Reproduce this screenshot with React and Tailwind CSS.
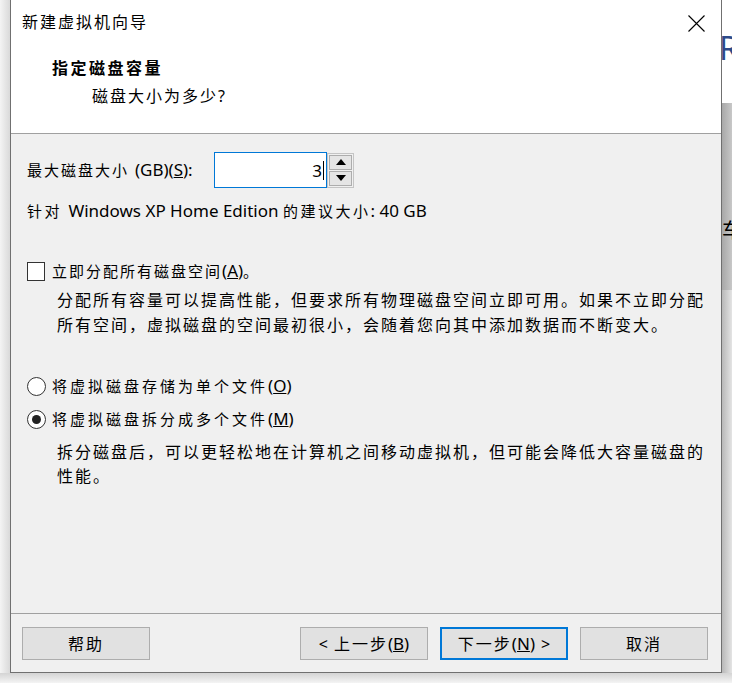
const font = "font-['Noto_Sans','Noto_Sans_CJK_SC',sans-serif]"

function Btn({ children, primary }) {
  return (
    <button
      className={`w-[128px] h-[33px] bg-[#e1e1e1] text-[16px] text-black flex items-center justify-center ${
        primary ? 'border-2 border-[#0078d7]' : 'border border-[#adadad]'
      }`}
    >
      {children}
    </button>
  )
}

function Arrow({ up }) {
  return (
    <svg width="10" height="6" viewBox="0 0 10 6">
      {up ? <path d="M0 6 L5 0 L10 6 Z" fill="#000" /> : <path d="M0 0 L5 6 L10 0 Z" fill="#000" />}
    </svg>
  )
}

function Radio({ checked }) {
  return (
    <span className="w-[19px] h-[19px] rounded-full border border-[#333] bg-white flex items-center justify-center shrink-0">
      {checked && <span className="w-[9px] h-[9px] rounded-full bg-[#222]" />}
    </span>
  )
}

// latin part inside spaced-out CJK text
function L({ children }) {
  return <span className="tracking-normal text-[17px]">{children}</span>
}

export default function App() {
  return (
    <div className={`w-[732px] h-[683px] overflow-hidden bg-white flex flex-col ${font}`}>
      <div className="flex h-[673px]">
        <div className="w-[10px] bg-gradient-to-r from-[#f4f4f4] to-[#d9d9d9]" />

        <div className="w-[712px] flex flex-col border-x border-b border-[#707070] bg-[#f0f0f0]">
          {/* header */}
          <div className="h-[134px] bg-white border-b border-[#a0a0a0] relative">
            <div className="pl-[11px] pt-[10px] leading-[24px] text-[16px] tracking-[2px] text-black">新建虚拟机向导</div>
            <svg className="absolute left-[677px] top-[15px]" width="17" height="17" viewBox="0 0 17 17">
              <path d="M0.5 0.5 L16.5 16.5 M16.5 0.5 L0.5 16.5" stroke="#000" strokeWidth="1.1" />
            </svg>
            <div className="pl-[41px] mt-[22px] leading-[24px] text-[16px] font-bold tracking-[2.5px] text-black">指定磁盘容量</div>
            <div className="pl-[81px] mt-[4px] leading-[24px] text-[16px] tracking-[2px] text-black">
              磁盘大小为多少<span className="tracking-normal">?</span>
            </div>
          </div>

          {/* body */}
          <div className="h-[479px] pl-[16px] text-black">
            <div className="mt-[18px] h-[36px] flex items-center">
              <span className="w-[187px] text-[15px] tracking-[2px] whitespace-nowrap">
                最大磁盘大小 <L>(GB)(<span className="underline">S</span>):</L>
              </span>
              <div className="w-[113px] h-[36px] bg-white border border-[#0078d7] flex items-center justify-end pr-[2px]">
                <span className="text-[17px] leading-none">3</span>
                <span className="w-px h-[19px] bg-black ml-px" />
              </div>
              <div className="w-[27px] h-[35px] border border-[#c4c4c4] p-px flex flex-col gap-px">
                <div className="flex-1 bg-[#e5e5e5] border border-[#adadad] flex items-center justify-center">
                  <Arrow up />
                </div>
                <div className="flex-1 bg-[#e5e5e5] border border-[#adadad] flex items-center justify-center">
                  <Arrow />
                </div>
              </div>
            </div>

            <div className="mt-[11px] leading-[24px] text-[15px] tracking-[2.5px] whitespace-nowrap">
              针对 <L>Windows XP Home Edition </L>的建议大小<L>: 40 GB</L>
            </div>

            <div className="mt-[36px] h-[24px] flex items-center gap-[7px]">
              <span className="w-[18px] h-[19px] border border-[#333] bg-white shrink-0" />
              <span className="text-[15px] tracking-[2px]">
                立即分配所有磁盘空间<L>(<span className="underline">A</span>)</L>。
              </span>
            </div>
            <p className="pl-[30px] pt-[5px] leading-[25px] text-[16px] tracking-[2px] whitespace-nowrap">
              分配所有容量可以提高性能，但要求所有物理磁盘空间立即可用。如果不立即分配
              <br />
              所有空间，虚拟磁盘的空间最初很小，会随着您向其中添加数据而不断变大。
            </p>

            <div className="mt-[36px] h-[24px] flex items-center gap-[6px]">
              <Radio />
              <span className="text-[15px] tracking-[3px]">
                将虚拟磁盘存储为单个文件<L>(<span className="underline">O</span>)</L>
              </span>
            </div>
            <div className="mt-[9px] h-[24px] flex items-center gap-[6px]">
              <Radio checked />
              <span className="text-[15px] tracking-[3px]">
                将虚拟磁盘拆分成多个文件<L>(<span className="underline">M</span>)</L>
              </span>
            </div>
            <p className="pl-[30px] mt-[9px] leading-[24px] text-[16px] tracking-[2px] whitespace-nowrap">
              拆分磁盘后，可以更轻松地在计算机之间移动虚拟机，但可能会降低大容量磁盘的
              <br />
              性能。
            </p>
          </div>

          {/* footer */}
          <div className="h-[59px] border-t border-[#a0a0a0] pt-[13px] pl-[11px] pr-[13px] flex items-start">
            <Btn>
              <span className="tracking-[2px]">帮助</span>
            </Btn>
            <div className="ml-auto flex gap-[12px]">
              <Btn>
                <span>&lt;</span>
                <span className="tracking-[2px] ml-[6px]">上一步</span>
                <span className="text-[17px]">(<span className="underline">B</span>)</span>
              </Btn>
              <Btn primary>
                <span className="tracking-[2px]">下一步</span>
                <span className="text-[17px]">(<span className="underline">N</span>)</span>
                <span className="ml-[6px]">&gt;</span>
              </Btn>
              <Btn>
                <span className="tracking-[2px]">取消</span>
              </Btn>
            </div>
          </div>
        </div>

        {/* app behind the dialog */}
        <div className="flex-1 flex flex-col">
          <div className="h-[103px] bg-white relative overflow-hidden">
            <span className="absolute left-[-3px] top-[32px] text-[32px] leading-none text-[#2c4a8a]">R</span>
          </div>
          <div className="h-[187px] bg-gradient-to-r from-[#a8a8a8] to-[#c8c8c8] relative overflow-hidden">
            <span className="absolute left-[0px] top-[118px] text-[20px] leading-none text-black">车</span>
          </div>
          <div className="flex-1 bg-gradient-to-r from-[#b8b8b8] to-[#e4e4e4]" />
        </div>
      </div>
      <div className="flex-1 bg-gradient-to-b from-[#d4d4d4] to-[#f4f4f4]" />
    </div>
  )
}
